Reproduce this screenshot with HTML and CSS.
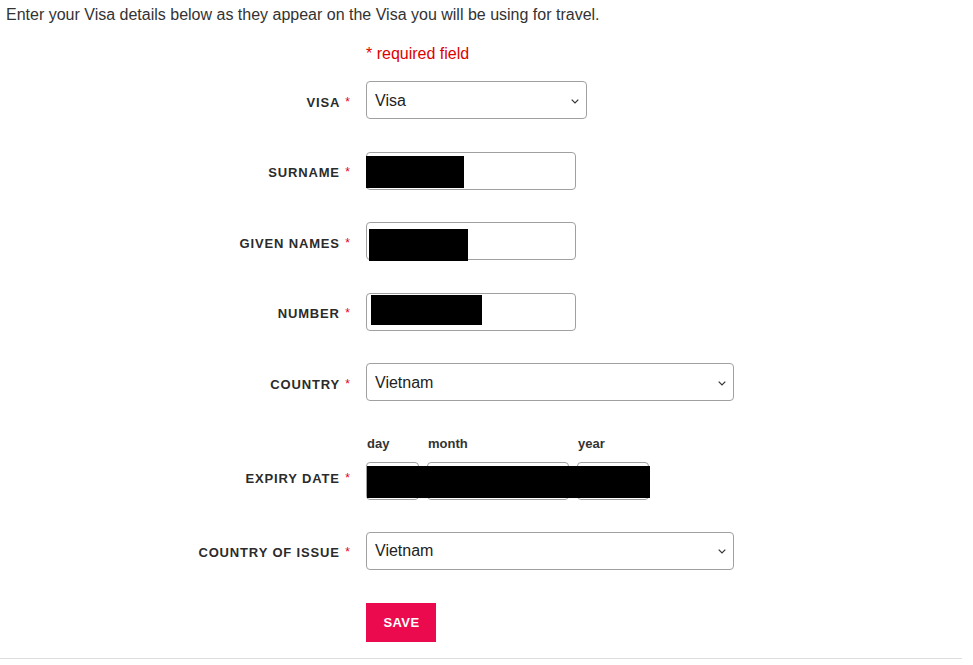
FILE: index.html
```html
<!DOCTYPE html>
<html>
<head>
<meta charset="utf-8">
<link rel="stylesheet" href="styles.css">
</head>
<body>
<div class="page">
  <p class="intro">Enter your Visa details below as they appear on the Visa you will be using for travel.</p>
  <form class="form">
    <div class="req-note"><span>* required field</span></div>

    <div class="row">
      <label class="lbl">VISA <span class="ast">*</span></label>
      <div class="ctl">
        <div class="select w-visa"><span>Visa</span><svg class="chev" width="8" height="5" viewBox="0 0 8 5"><path d="M0.7 0.7l3.3 3.3 3.3-3.3" fill="none" stroke="#333" stroke-width="1.2"/></svg></div>
      </div>
    </div>

    <div class="row">
      <label class="lbl">SURNAME <span class="ast">*</span></label>
      <div class="ctl">
        <div class="input w-text"><div class="redact r-surname"></div></div>
      </div>
    </div>

    <div class="row">
      <label class="lbl">GIVEN NAMES <span class="ast">*</span></label>
      <div class="ctl">
        <div class="input w-text"><div class="redact r-given"></div></div>
      </div>
    </div>

    <div class="row">
      <label class="lbl">NUMBER <span class="ast">*</span></label>
      <div class="ctl">
        <div class="input w-text"><div class="redact r-number"></div></div>
      </div>
    </div>

    <div class="row">
      <label class="lbl">COUNTRY <span class="ast">*</span></label>
      <div class="ctl">
        <div class="select w-wide"><span>Vietnam</span><svg class="chev" width="8" height="5" viewBox="0 0 8 5"><path d="M0.7 0.7l3.3 3.3 3.3-3.3" fill="none" stroke="#333" stroke-width="1.2"/></svg></div>
      </div>
    </div>

    <div class="row row-date">
      <label class="lbl">EXPIRY DATE <span class="ast">*</span></label>
      <div class="ctl date-ctl">
        <div class="date-part"><span class="sub">day</span><div class="input w-day"></div></div>
        <div class="date-part"><span class="sub">month</span><div class="input w-month"></div></div>
        <div class="date-part"><span class="sub">year</span><div class="input w-year"></div></div>
        <div class="redact r-date"></div>
      </div>
    </div>

    <div class="row row-issue">
      <label class="lbl">COUNTRY OF ISSUE <span class="ast">*</span></label>
      <div class="ctl">
        <div class="select w-wide"><span>Vietnam</span><svg class="chev" width="8" height="5" viewBox="0 0 8 5"><path d="M0.7 0.7l3.3 3.3 3.3-3.3" fill="none" stroke="#333" stroke-width="1.2"/></svg></div>
      </div>
    </div>

    <div class="row row-btn">
      <div></div>
      <div class="ctl"><button type="button" class="save">SAVE</button></div>
    </div>
  </form>
  <div class="rule"></div>
</div>
</body>
</html>
```

FILE: styles.css
```css
* { box-sizing: border-box; }
html, body { margin: 0; padding: 0; background: #fff; }
body {
  font-family: "Liberation Sans", Arial, sans-serif;
  color: #333;
}
.page { width: 973px; height: 665px; overflow: hidden; }
.intro {
  margin: 0;
  padding: 5px 0 0 6px;
  font-size: 16px;
  line-height: 20px;
  color: #333;
}
.form {
  display: flex;
  flex-direction: column;
  padding-top: 19px;
}
.req-note {
  padding-left: 366px;
  font-size: 16px;
  line-height: 20px;
  color: #d00;
}
.row {
  display: grid;
  grid-template-columns: 350px 1fr;
  column-gap: 16px;
  align-items: center;
  margin-top: 32.5px;
}
.row:nth-child(2) { margin-top: 17px; }
.lbl {
  text-align: right;
  font-size: 13px;
  font-weight: bold;
  letter-spacing: 0.85px;
  color: #2b2b2b;
  line-height: 16px;
  padding-top: 4px;
}
.ast {
  color: #e0001b;
  font-weight: normal;
  letter-spacing: 0;
  font-size: 12px;
  vertical-align: 1px;
  margin-left: 1px;
}
.ctl { position: relative; display: flex; }
.select, .input {
  height: 38px;
  border: 1px solid #a0a0a0;
  border-radius: 4px;
  background: #fff;
  position: relative;
}
.select {
  display: flex;
  align-items: center;
  justify-content: space-between;
  padding: 1px 7px 0 8px;
  font-size: 16px;
  color: #222;
}
.chev { margin-top: 1px; }
.w-visa { width: 221px; }
.w-text { width: 210px; }
.w-wide { width: 368px; }
.redact { position: absolute; background: #000; }
.r-surname { left: -1px; top: 3px; width: 98px; height: 32px; }
.r-given { left: 2px; top: 6px; width: 99px; height: 32px; }
.r-number { left: 4px; top: 1px; width: 111px; height: 30px; }

.row-date { margin-top: 35px; align-items: end; }
.row-date .lbl { padding-bottom: 13px; padding-top: 0; }
.date-ctl { gap: 8px; align-items: flex-end; }
.date-part { display: flex; flex-direction: column; }
.sub {
  font-size: 13px;
  font-weight: bold;
  line-height: 16px;
  color: #333;
  padding-left: 1px;
  margin-bottom: 10px;
}
.w-day { width: 53px; }
.w-month { width: 142px; }
.w-year { width: 72px; }
.r-date { left: 1px; bottom: 2px; width: 283px; height: 32px; }

.row-issue { margin-top: 31.5px; }
.row-btn { margin-top: 33px; }
.save {
  width: 70px;
  height: 39px;
  border: 0;
  border-radius: 0;
  background: #ec0a4f;
  color: #fff;
  font-family: "Liberation Sans", Arial, sans-serif;
  font-size: 13px;
  font-weight: bold;
  letter-spacing: 0.4px;
  padding: 0 0 0 1px;
}
.rule {
  margin-top: 16px;
  border-top: 1px solid #ddd;
  width: 962px;
}
```
